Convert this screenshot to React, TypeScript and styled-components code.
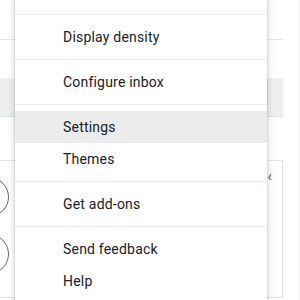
import React from "react"
import styled, { createGlobalStyle } from "styled-components"

const GlobalStyle = createGlobalStyle`
  html, body {
    margin: 0;
    padding: 0;
    background: #ffffff;
  }
  body {
    font-family: Roboto, "Liberation Sans", Arial, sans-serif;
  }
`

const Page = styled.div`
  position: relative;
  width: 300px;
  height: 300px;
  overflow: hidden;
  display: flex;
  background: #ffffff;
`

const Main = styled.div`
  width: 283px;
  display: flex;
  flex-direction: column;
`

const SideRail = styled.div`
  flex: 1;
  border-right: 1px solid #f1f1f1;
`

const HeaderRow = styled.div`
  height: 39px;
  border-bottom: 1px solid #e6e8e8;
`

const Gap = styled.div<{ h: number }>`
  height: ${p => p.h}px;
`

const Band = styled.div`
  height: 38px;
  background: #eef0f0;
  border-bottom: 1px solid #dde1e1;
`

const ListBox = styled.div`
  height: 136px;
  border-top: 1px solid #e3e5e5;
  border-right: 1px solid #dfe1e1;
  border-bottom: 1px solid #e3e5e5;
  display: flex;
  justify-content: space-between;
`

const Avatars = styled.div`
  display: flex;
  flex-direction: column;
  gap: 17px;
  padding-top: 16px;
  margin-left: -31px;
`

const Ring = styled.div`
  width: 38px;
  height: 38px;
  border-radius: 50%;
  border: 1.5px solid #6a6a6a;
`

const Chevron = styled.div`
  padding: 8px 10px 0 0;
  color: #6f6f6f;
  font-size: 15px;
  font-weight: 700;
  line-height: 1;
`

const Menu = styled.div`
  position: absolute;
  left: 15px;
  top: -30px;
  width: 252px;
  background: #ffffff;
  box-shadow: 0 2px 6px 2px rgba(60, 64, 67, 0.15), 0 1px 2px rgba(60, 64, 67, 0.3);
  display: flex;
  flex-direction: column;
`

const Section = styled.div`
  padding: 6px 0;
  border-bottom: 1px solid #ececec;
  &:last-child {
    border-bottom: none;
  }
`

const Item = styled.div<{ active?: boolean }>`
  height: 32px;
  display: flex;
  align-items: center;
  padding-left: 48px;
  font-size: 14px;
  color: #202124;
  letter-spacing: 0.2px;
  background: ${p => (p.active ? "#ececec" : "transparent")};
`

const sections: string[][] = [
  [""],
  ["Display density"],
  ["Configure inbox"],
  ["Settings", "Themes"],
  ["Get add-ons"],
  ["Send feedback", "Help"]
]

export default function App() {
  return (
    <>
      <GlobalStyle />
      <Page>
        <Main>
          <HeaderRow />
          <Gap h={38} />
          <Band />
          <Gap h={43} />
          <ListBox>
            <Avatars>
              <Ring />
              <Ring />
            </Avatars>
            <Chevron>‹</Chevron>
          </ListBox>
        </Main>
        <SideRail />
        <Menu>
          {sections.map((items, i) => (
            <Section key={i}>
              {items.map(label => (
                <Item key={label} active={label === "Settings"}>
                  {label}
                </Item>
              ))}
            </Section>
          ))}
        </Menu>
      </Page>
    </>
  )
}
